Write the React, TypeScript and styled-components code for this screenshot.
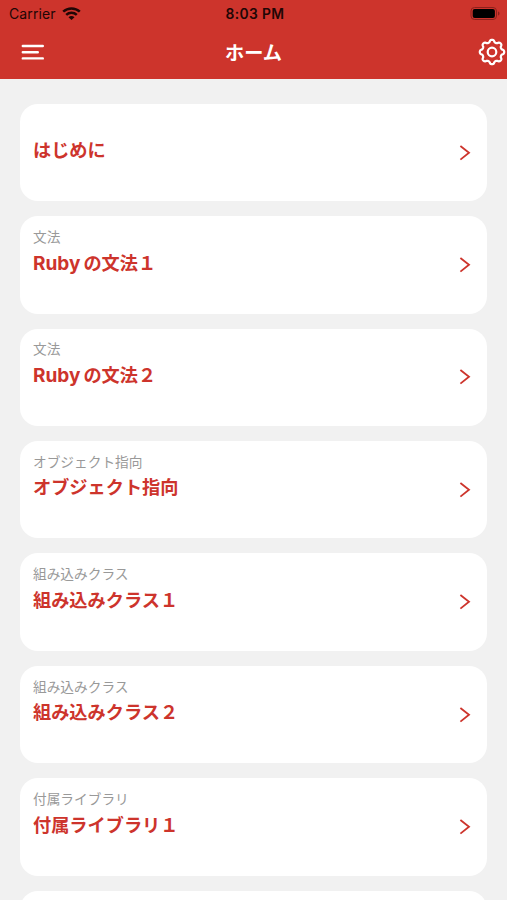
import React from "react";
import styled, { createGlobalStyle } from "styled-components";

const RED = "#cd342c";

const GlobalStyle = createGlobalStyle`
  * { box-sizing: border-box; }
  html, body { margin: 0; padding: 0; background: #f1f1f1; }
  body { overflow: hidden; font-family: Inter, "Noto Sans CJK JP", sans-serif; }
`;

const Screen = styled.div`
  height: 900px;
  overflow: hidden;
  background: #f1f1f1;
`;

const Header = styled.header`
  height: 79px;
  background: ${RED};
`;

const StatusBar = styled.div`
  display: grid;
  grid-template-columns: 1fr auto 1fr;
  align-items: center;
  height: 27px;
  padding: 0 6px 0 9px;
  color: #200605;
  font-size: 14px;
`;

const Carrier = styled.div`
  display: flex;
  align-items: center;
  gap: 6px;
  letter-spacing: 0.1px;
`;

const Clock = styled.div`
  font-weight: 600;
  font-size: 13.8px;
  letter-spacing: 0.4px;
`;

const BatterySlot = styled.div`
  display: flex;
  justify-content: flex-end;
`;

const NavBar = styled.nav`
  display: grid;
  grid-template-columns: 1fr auto 1fr;
  align-items: center;
  height: 50px;
  padding: 0 1px 0 21px;
  color: #fff;
`;

const IconButton = styled.button<{ $end?: boolean }>`
  display: flex;
  justify-self: ${(p) => (p.$end ? "end" : "start")};
  padding: 0;
  border: 0;
  background: none;
  color: inherit;
`;

const NavTitle = styled.h1`
  margin: 0;
  padding: 1px 20px 0 0;
  font-size: 19.2px;
  line-height: 28px;
  font-weight: 700;
`;

const List = styled.main`
  display: flex;
  flex-direction: column;
  gap: 14.9px;
  padding: 24.8px 19.6px 0 20.4px;
`;

const Card = styled.article`
  display: flex;
  flex: none;
  align-items: center;
  justify-content: space-between;
  height: 97.5px;
  padding: 0 16px 0 12.6px;
  border-radius: 18px;
  background: #fff;
  color: ${RED};
`;

const CardText = styled.div`
  align-self: flex-start;
  padding-top: 10.8px;
`;

const Category = styled.div`
  height: 20px;
  color: #999;
  font-size: 13.7px;
  line-height: 20px;
`;

const Title = styled.h2`
  margin: 1.7px 0 0;
  font-size: 18.2px;
  line-height: 28px;
  font-weight: 700;
`;

const Latin = styled.span`
  margin-right: 3px;
  font-size: 19px;
`;

const WifiIcon = () => (
  <svg width="19" height="14" viewBox="0 0 19 14" fill="none" stroke="#200605" strokeWidth="2.5">
    <path d="M1.2 4.6C5.8.3 13.2.3 17.8 4.6" />
    <path d="M4.2 7.9c3-2.8 7.6-2.8 10.6 0" />
    <path d="M9.5 13.1 6.5 10.2c1.7-1.5 4.3-1.5 6 0Z" fill="#200605" stroke="none" />
  </svg>
);

const BatteryIcon = () => (
  <svg width="31" height="14" viewBox="0 0 31 14">
    <rect x="1" y="0.5" width="25.5" height="12" rx="3.5" fill="none" stroke="#8c211c" />
    <rect x="2.7" y="2" width="22.2" height="9" rx="2" fill="#000" />
    <path d="M28 4.5v4c2-.6 2-3.4 0-4Z" fill="#8c211c" />
  </svg>
);

const MenuIcon = () => (
  <svg width="24" height="18" viewBox="0 0 24 18" stroke="currentColor" strokeWidth="2.4" strokeLinecap="round">
    <path d="M1.8 3h20M1.8 9.2h15M1.8 15.4h20" />
  </svg>
);

const gearPath = (() => {
  const steps = 128;
  let d = "";
  for (let i = 0; i < steps; i++) {
    const a = (i / steps) * Math.PI * 2;
    const wave = Math.cos(8 * a);
    const r = 11 + 1.2 * Math.sign(wave) * Math.pow(Math.abs(wave), 0.5);
    d += `${i ? "L" : "M"}${(14 + r * Math.cos(a)).toFixed(2)} ${(14 + r * Math.sin(a)).toFixed(2)}`;
  }
  return d + "Z";
})();

const GearIcon = () => (
  <svg width="28" height="28" viewBox="0 0 28 28" fill="none" stroke="currentColor" strokeWidth="2.2">
    <path d={gearPath} strokeLinejoin="round" />
    <circle cx="14" cy="14" r="4.3" />
  </svg>
);

const ChevronIcon = () => (
  <svg width="12" height="16" viewBox="0 0 12 16" fill="none" stroke="currentColor" strokeWidth="1.8">
    <path d="M1.4 1 10 7.8l-8.6 6.8" />
  </svg>
);

const items = [
  { category: "", title: "はじめに" },
  { category: "文法", latin: "Ruby", title: "の文法\uFF11" },
  { category: "文法", latin: "Ruby", title: "の文法\uFF12" },
  { category: "オブジェクト指向", title: "オブジェクト指向" },
  { category: "組み込みクラス", title: "組み込みクラス\uFF11" },
  { category: "組み込みクラス", title: "組み込みクラス\uFF12" },
  { category: "付属ライブラリ", title: "付属ライブラリ\uFF11" },
];

export default function App() {
  return (
    <Screen>
      <GlobalStyle />
      <Header>
        <StatusBar>
          <Carrier>
            Carrier
            <WifiIcon />
          </Carrier>
          <Clock>8:03 PM</Clock>
          <BatterySlot>
            <BatteryIcon />
          </BatterySlot>
        </StatusBar>
        <NavBar>
          <IconButton aria-label="メニュー">
            <MenuIcon />
          </IconButton>
          <NavTitle>ホーム</NavTitle>
          <IconButton $end aria-label="設定">
            <GearIcon />
          </IconButton>
        </NavBar>
      </Header>
      <List>
        {items.map((item) => (
          <Card key={item.title}>
            <CardText>
              <Category>{item.category}</Category>
              <Title>
                {item.latin && <Latin>{item.latin}</Latin>}
                {item.title}
              </Title>
            </CardText>
            <ChevronIcon />
          </Card>
        ))}
        <Card />
      </List>
    </Screen>
  );
}
